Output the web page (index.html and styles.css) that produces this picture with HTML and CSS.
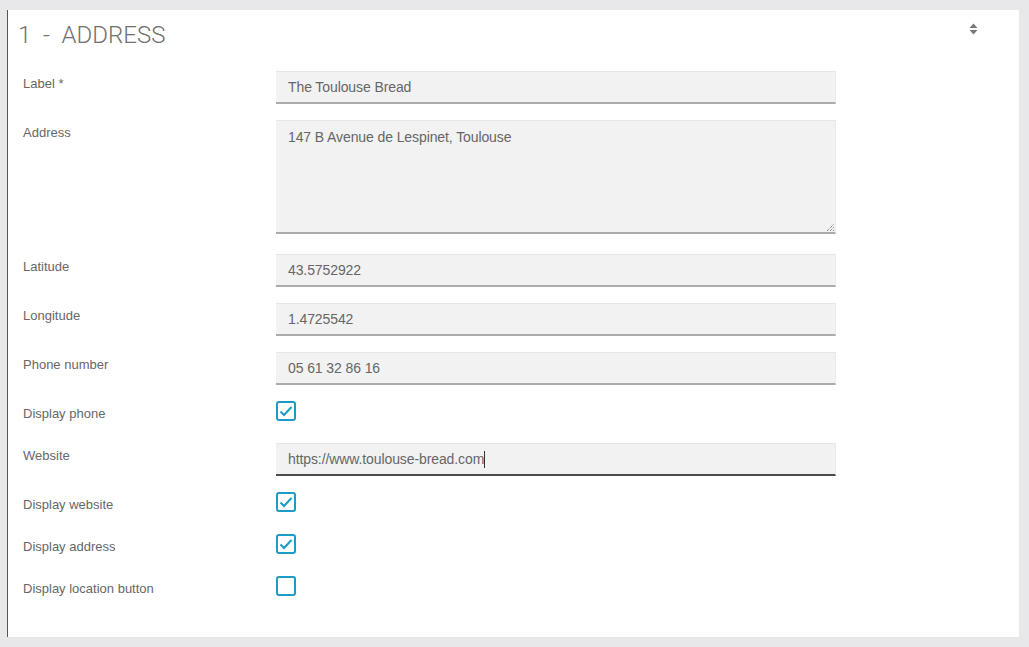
FILE: index.html
```html
<!DOCTYPE html>
<html>
<head>
<meta charset="utf-8">
<link rel="stylesheet" href="styles.css">
</head>
<body>
<div class="page">
  <section class="panel">
    <header class="panel-head">
      <h1 class="title">1&nbsp; - &nbsp;ADDRESS</h1>
      <svg class="sort" width="9" height="12" viewBox="0 0 9 12"><path d="M4.5 0.5 L8.5 5 L0.5 5 Z M0.5 7 L8.5 7 L4.5 11.5 Z" fill="#7a7a7a"/></svg>
    </header>
    <form class="form">
      <div class="row"><label class="lbl">Label *</label><div class="field">The Toulouse Bread</div></div>
      <div class="row row-area"><label class="lbl">Address</label><div class="field area">147 B Avenue de Lespinet, Toulouse<svg class="grip" width="8" height="8" viewBox="0 0 8 8"><path d="M1 8 L8 1 M4 8 L8 4 M7 8 L8 7" stroke="#444" stroke-width="0.9" stroke-dasharray="1 1"/></svg></div></div>
      <div class="row"><label class="lbl">Latitude</label><div class="field">43.5752922</div></div>
      <div class="row"><label class="lbl">Longitude</label><div class="field">1.4725542</div></div>
      <div class="row"><label class="lbl">Phone number</label><div class="field">05 61 32 86 16</div></div>
      <div class="row row-check"><label class="lbl">Display phone</label><span class="check on"><svg width="14" height="12" viewBox="0 0 14 12"><path d="M1.5 6.5 L5 10 L12.5 2" fill="none" stroke="#1b9bc6" stroke-width="2"/></svg></span></div>
      <div class="row"><label class="lbl">Website</label><div class="field focus">https://www.toulouse-bread.com<span class="caret"></span></div></div>
      <div class="row row-check"><label class="lbl">Display website</label><span class="check on"><svg width="14" height="12" viewBox="0 0 14 12"><path d="M1.5 6.5 L5 10 L12.5 2" fill="none" stroke="#1b9bc6" stroke-width="2"/></svg></span></div>
      <div class="row row-check"><label class="lbl">Display address</label><span class="check on"><svg width="14" height="12" viewBox="0 0 14 12"><path d="M1.5 6.5 L5 10 L12.5 2" fill="none" stroke="#1b9bc6" stroke-width="2"/></svg></span></div>
      <div class="row row-check"><label class="lbl">Display location button</label><span class="check"></span></div>
    </form>
  </section>
</div>
</body>
</html>
```
FILE: styles.css
```css
html, body {
  margin: 0;
  padding: 0;
  background: #e8e8ea;
  font-family: "Liberation Sans", Arial, sans-serif;
}
.page {
  padding: 10px 10px 10px 7px;
  height: 647px;
  box-sizing: border-box;
}
.panel {
  background: #fff;
  border-left: 1px solid #555;
  height: 627px;
  box-sizing: border-box;
  padding: 0 0 0 10px;
}
.panel-head {
  display: flex;
  justify-content: space-between;
  align-items: flex-start;
  height: 61px;
}
.title {
  margin: 0;
  padding-top: 10px;
  font-family: Roboto, "Liberation Sans", sans-serif;
  font-weight: 300;
  font-size: 24px;
  line-height: 30px;
  color: #707070;
}
.sort {
  margin: 13px 41px 0 0;
}
.form {
  display: flex;
  flex-direction: column;
  gap: 16px;
}
.row {
  display: flex;
  align-items: flex-start;
  height: 33px;
}
.row-area { height: 118px; }
.row-check { height: 26px; }
.lbl {
  width: 253px;
  flex: none;
  padding-left: 5px;
  padding-top: 5px;
  font-size: 13px;
  line-height: 15px;
  color: #676767;
}
.field {
  position: relative;
  width: 560px;
  height: 33px;
  box-sizing: border-box;
  background: #f2f2f2;
  border-top: 1px solid #e6e6e6;
  border-right: 1px solid #ececec;
  border-bottom: 2px solid #ababab;
  padding: 7px 12px 0;
  font-size: 14px;
  line-height: 16px;
  color: #666;
  letter-spacing: -0.1px;
}
.field.area {
  height: 114px;
  padding-top: 8px;
}
.field.focus {
  border-bottom-color: #4a4a4a;
}
.caret {
  display: inline-block;
  width: 1px;
  height: 17px;
  background: #333;
  vertical-align: -4px;
}
.grip {
  position: absolute;
  right: 1px;
  bottom: 1px;
}
.check {
  width: 20px;
  height: 20px;
  box-sizing: border-box;
  border: 2px solid #1b9bc6;
  border-radius: 3px;
  display: flex;
  align-items: center;
  justify-content: center;
}
```
